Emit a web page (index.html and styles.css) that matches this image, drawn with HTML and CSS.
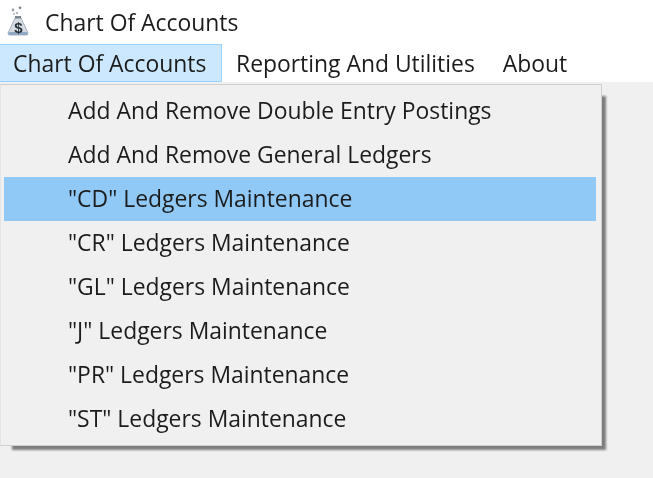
FILE: index.html
```html
<!DOCTYPE html>
<html lang="en">
<head>
    <meta charset="UTF-8">
    <meta name="viewport" content="width=device-width, initial-scale=1.0">
    <title>Chart Of Accounts</title>
    <link rel="stylesheet" href="styles.css">
</head>
<body>
    <div class="title-bar">
        <svg class="app-icon" width="24" height="32" viewBox="0 0 24 32">
            <path d="M9 12 L15 12 L22 27 Q22 29 20 29 L4 29 Q2 29 2 27 Z" fill="#d5dbe1" stroke="#a9b6c2" stroke-width="1"/>
            <path d="M3 26 L21 26 L22 29 L2 29 Z" fill="#8fa8c4"/>
            <rect x="9" y="10" width="6" height="2.5" fill="#7d8790"/>
            <circle cx="7" cy="4" r="1.4" fill="#9aa3aa"/>
            <circle cx="11" cy="7" r="1.3" fill="#b4bbc1"/>
            <circle cx="8" cy="8" r="1.1" fill="#b4bbc1"/>
            <circle cx="14" cy="1.8" r="1.4" fill="#7d8790"/>
            <text class="app-icon-s" x="12.5" y="27" text-anchor="middle">$</text>
        </svg>
        <span class="title-text">Chart Of Accounts</span>
    </div>

    <div class="menu-bar">
        <div class="menu-item menu-item-open">Chart Of Accounts</div>
        <div class="menu-item">Reporting And Utilities</div>
        <div class="menu-item">About</div>
    </div>

    <div class="content">
        <div class="popup">
            <ul class="popup-list">
                <li>Add And Remove Double Entry Postings</li>
                <li>Add And Remove General Ledgers</li>
                <li class="active">"CD" Ledgers Maintenance</li>
                <li>"CR" Ledgers Maintenance</li>
                <li>"GL" Ledgers Maintenance</li>
                <li>"J" Ledgers Maintenance</li>
                <li>"PR" Ledgers Maintenance</li>
                <li>"ST" Ledgers Maintenance</li>
            </ul>
        </div>
    </div>
</body>
</html>
```

FILE: styles.css
```css
html, body {
    height: 100%;
}
body {
    margin: 0;
    display: flex;
    flex-direction: column;
    overflow: hidden;
    background-color: #f0f0f0;
    color: #1c1c1c;
    font-family: "Open Sans", "Noto Sans", sans-serif;
    font-size: 22.9px;
    filter: blur(0.4px);
}
.title-bar {
    height: 44px;
    display: flex;
    align-items: center;
    gap: 15px;
    padding-left: 6px;
    box-sizing: border-box;
    background-color: #fff;
}
.app-icon {
    flex: none;
}
.app-icon-s {
    font-family: "Liberation Sans", sans-serif;
    font-size: 15px;
    font-weight: bold;
    fill: #26313a;
}
.menu-bar {
    height: 38px;
    display: flex;
    background-color: #fff;
}
.menu-item {
    padding: 0 14px;
    line-height: 40px;
    white-space: nowrap;
    box-sizing: border-box;
}
.menu-item-open {
    width: 222px;
    padding-left: 13px;
    background-color: #cce8ff;
    border: 1px solid #99d1ff;
    border-left: none;
    line-height: 38px;
}
.content {
    flex: 1;
    position: relative;
}
.popup {
    position: absolute;
    top: 2px;
    left: 0;
    width: 602px;
    height: 362px;
}
/* window shadow starts a bit in from the top left corner */
.popup::before {
    content: "";
    position: absolute;
    top: 12px;
    left: 12px;
    right: -4px;
    bottom: -4px;
    background-color: #7d7d7d;
    filter: blur(0.8px);
}
.popup-list {
    position: relative;
    height: 100%;
    margin: 0;
    padding: 4px 5px 3px 3px;
    list-style: none;
    box-sizing: border-box;
    background-color: #f0f0f0;
    border: 1px solid #cfcfcf;
    border-left-color: #e4e4e4;
}
.popup-list li {
    height: 44px;
    line-height: 43px;
    padding-left: 64px;
    white-space: nowrap;
}
.popup-list li.active {
    background-color: #90c8f6;
}
```
